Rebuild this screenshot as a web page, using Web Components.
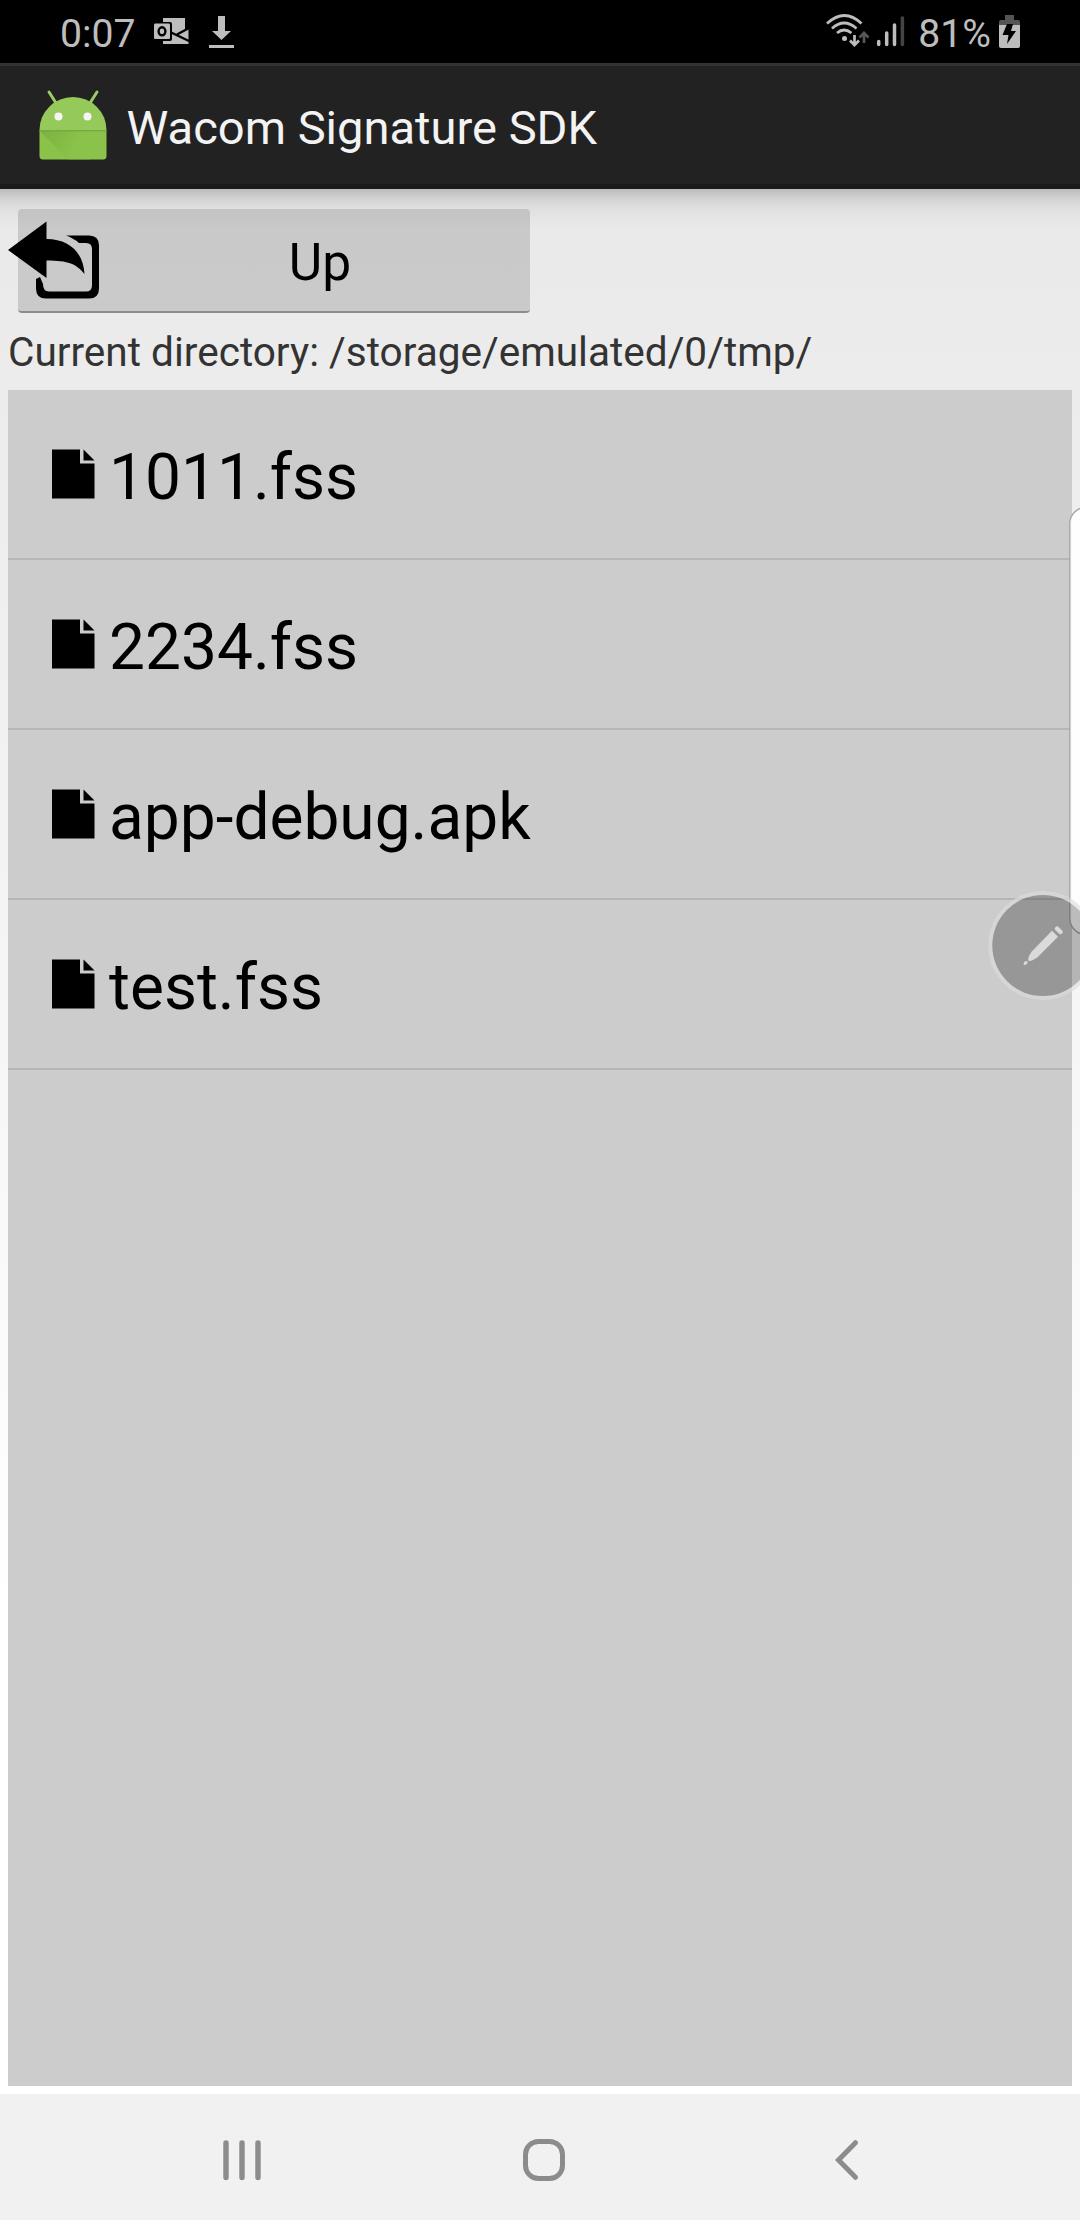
<!DOCTYPE html>
<html lang="en"><head><meta charset="utf-8"><title>Wacom Signature SDK</title>
<style>
html,body{margin:0;height:100%}
body{font-family:Roboto,"Noto Sans",sans-serif}
</style></head><body>
<phone-screen>
  <status-bar slot="top" time="0:07" battery="81%"></status-bar>
  <action-bar slot="top">Wacom Signature SDK</action-bar>
  <up-button>Up</up-button>
  <current-path>Current directory: /storage/emulated/0/tmp/</current-path>
  <file-list>
    <file-row>1011.fss</file-row>
    <file-row>2234.fss</file-row>
    <file-row>app-debug.apk</file-row>
    <file-row>test.fss</file-row>
  </file-list>
  <nav-bar slot="bottom"></nav-bar>
  <edge-tools slot="over"></edge-tools>
</phone-screen>
<script>
const define=(name,html,setup)=>customElements.define(name,class extends HTMLElement{
  constructor(){super();this.attachShadow({mode:'open'}).innerHTML=html;}
  connectedCallback(){if(setup)setup(this,this.shadowRoot);}
});

define('phone-screen',`<style>
:host{display:flex;flex-direction:column;position:relative;width:1080px;height:2220px;overflow:hidden;background:#fff}
main{flex:1;min-height:0;display:flex;flex-direction:column;box-sizing:border-box;padding:20px 8px 8px;
 background:linear-gradient(rgba(0,0,0,.2) 0,rgba(0,0,0,.1) 9px,rgba(0,0,0,.04) 20px,rgba(0,0,0,.01) 32px,transparent 42px),linear-gradient(#e9e9e9,#fff 75%)}
</style><slot name="top"></slot><main><slot></slot></main><slot name="bottom"></slot><slot name="over"></slot>`);

define('status-bar',`<style>
:host{display:flex;align-items:center;height:63px;background:#000;color:#bdbdbd;font-size:39.200px;line-height:63px;box-sizing:border-box;padding:0 60px 0 60px}
span{white-space:pre;padding-top:6px}
.gap{flex:1}svg{display:block;flex:none}
</style>
<span id="t"></span>
<svg style="margin-left:17px" width="37" height="63" viewBox="153 0 37 63"><path fill="#bdbdbd" d="M163 18h22v10.500l3.500-1V44H163z"/><path d="M185 17h5v11l-5 1.500z"/><path fill="none" stroke="#000" stroke-width="2.400" d="M168 31l21 10M177 34.500l12-6.500"/><rect x="153" y="22" width="19" height="19" rx="2"/><rect x="154" y="23.500" width="16" height="15.500" rx="1.200" fill="#bdbdbd"/><ellipse cx="162" cy="31.300" rx="3.400" ry="4" fill="none" stroke="#000" stroke-width="2.400"/></svg>
<svg style="margin-left:19px" width="25" height="63" viewBox="209 0 25 63" fill="#bdbdbd"><path d="M218 16h7v15h6l-9.500 9-9.500-9h6zM209 45h25v3h-25z"/></svg>
<div class="gap"></div>
<svg width="80" height="63" viewBox="826 0 80 63" fill="none" stroke="#bdbdbd" stroke-width="2.700"><path d="M827 23.500q17.500-16 34.500 0M832 28.500q12-11 24.500 0M837 33q7-6 14.500 0"/><circle cx="844.500" cy="38.500" r="2.500" fill="#bdbdbd" stroke="none"/><path d="M854.500 35v10M850 40.500l4.500 4.500 4.500-4.500"/><path stroke="#555" d="M864 43v-10M859.500 37.500l4.500-4.500 4.500 4.500"/><g stroke-width="3.500" stroke-linecap="round"><path d="M878.700 41.500v3M886.700 33v11.500M894.500 25v19.500"/><path stroke="#444" d="M902.400 18v26.500"/></g></svg>
<span id="b" style="margin-left:12px"></span>
<svg style="margin-left:8px" width="21" height="63" viewBox="999 0 21 63"><path fill="#555" d="M1005 15h9v5h4q2 0 2 2v4h-21v-4q0-2 2-2h4z"/><path fill="#bdbdbd" d="M999 25h21v21q0 2-2 2h-17q-2 0-2-2z"/><path fill="#000" d="M1007 24h6l-2 7h5l-9 13 1.500-9h-6z"/></svg>`,
(e,s)=>{s.getElementById('t').textContent=e.getAttribute('time');s.getElementById('b').textContent=e.getAttribute('battery');});

define('action-bar',`<style>
:host{display:flex;align-items:center;height:126px;box-sizing:border-box;padding:0 38px;background:#222;border-top:3px solid #333;border-bottom:5px solid #1a1a1a;color:#f3f3f3;font-size:47.100px}
svg{display:block;margin-right:18.500px}span{padding-top:4px}
</style>
<svg width="70" height="74" viewBox="38 88 70 74"><defs><linearGradient id="g" gradientUnits="userSpaceOnUse" x1="42" y1="131" x2="76" y2="150"><stop stop-color="#6fa33b"/><stop offset="1" stop-color="#8bc34a"/></linearGradient></defs><path d="M49 92l7 11M97 92l-7 11" stroke="#9ccc65" stroke-width="3" stroke-linecap="round"/><path fill="#95ca5b" d="M39.500 131v-1a33.500 33 0 0 1 67 0v1z"/><path fill="#8bc34a" d="M39.500 131h67v25q0 3.500-3.500 3.500H43q-3.500 0-3.500-3.500z"/><path fill="url(#g)" opacity=".55" d="M40 131h40l10 28.500H68z"/><path fill="#6b9e3b" d="M39.500 130.300h67v1h-67z"/><circle cx="58.500" cy="116.500" r="4" fill="#f5f5f5"/><circle cx="87.500" cy="116.500" r="4" fill="#f5f5f5"/></svg><span><slot></slot></span>`);

define('up-button',`<style>
:host{display:flex;flex:none;align-items:center;width:512px;height:104px;box-sizing:border-box;margin-left:10px;border-radius:4px;background:linear-gradient(#c3c3c3,#c9c9c9 20px,#cacaca);border-bottom:2px solid #8c8c8c;color:#000;font-size:51.500px}
svg{flex:none;margin:0 0 0 -10px}span{flex:1;text-align:center;padding:4px 0 0 10px}
</style>
<svg width="92" height="78" viewBox="8 220 92 78"><path d="M8 249l38.500-28.500V238c23 0 37 14 38 35-8-10-16-13.500-38-13.500V277z"/><path d="M66 234.500h23q10 0 10 10v43q0 10-10 10H46q-10 0-10-10V278l4-2 3 7q0 7.500 6 7.500h37q6 0 6-6v-36.500q0-6-6-6H79q-5-4.500-13-7.500z"/></svg><span><slot></slot></span>`);

define('current-path',`<style>:host{display:block;flex:none;height:77px;box-sizing:border-box;padding-top:1px;line-height:77px;color:#333;font-size:40.550px;white-space:nowrap}</style><slot></slot>`);

define('file-list',`<style>:host{display:flex;flex-direction:column;flex:1;background:#ccc}</style><slot></slot>`);

define('file-row',`<style>
:host{display:flex;align-items:center;height:168px;border-bottom:2px solid #b6b6b6;padding-left:43px;color:#000;font-size:64px}
svg{margin-right:13px;flex:none}span{padding-top:6px}
</style><svg width="45" height="50" viewBox="51 449 45 50"><path d="M52 449.500h28v14h14.500v35H52z"/><path d="M83.500 449.500l11 11h-11z"/></svg><span><slot></slot></span>`);

define('nav-bar',`<style>:host{display:flex;flex:none;height:126px;background:#f1f1f1;align-items:center;box-sizing:border-box;padding:6px 220px 0}
svg{display:block;flex:none}</style>
<svg width="44" height="44" viewBox="220 2138 44 44" stroke="#8c8c8c" stroke-width="5.400" stroke-linecap="round"><path d="M226 2143v34.500M242 2143v34.500M258 2143v34.500"/></svg>
<svg style="margin-left:257px" width="46" height="46" viewBox="521 2137 46 46" fill="none" stroke="#8c8c8c" stroke-width="5"><rect x="525.500" y="2141.500" width="37" height="37" rx="13"/></svg>
<svg style="margin-left:264px" width="30" height="44" viewBox="831 2138 30 44" fill="none" stroke="#8c8c8c" stroke-width="5" stroke-linecap="round"><path d="M855.500 2142.700l-17 17.300 17 17.300"/></svg>`);

define('edge-tools',`<style>
:host{display:block;position:absolute;left:980px;top:500px;width:100px;height:510px}svg{display:block}
</style><svg width="100" height="510" viewBox="980 500 100 510">
<rect x="1069.800" y="507.500" width="40" height="427" rx="16" fill="#fff" fill-opacity=".9" stroke="#a3a3a3" stroke-width="1.300"/>
<circle cx="1042.800" cy="945.500" r="52.500" fill="none" stroke="#dcdcdc" stroke-opacity=".6" stroke-width="4"/>
<circle cx="1042.800" cy="945.500" r="50.500" fill="#000" fill-opacity=".26"/>
<path fill="#dadada" d="M1052 930.800l6 6-20.500 20.500q-6 4.500-9 3.500-1.500-3 3.500-9.500z"/><path stroke="#dadada" stroke-width="4.400" stroke-linecap="round" d="M1057 928.700l3.500 3.300"/><ellipse cx="1025.600" cy="963" rx="2.300" ry="1.600" fill="#dadada" transform="rotate(-40 1025.600 963)"/></svg>`);
</script></body></html>
